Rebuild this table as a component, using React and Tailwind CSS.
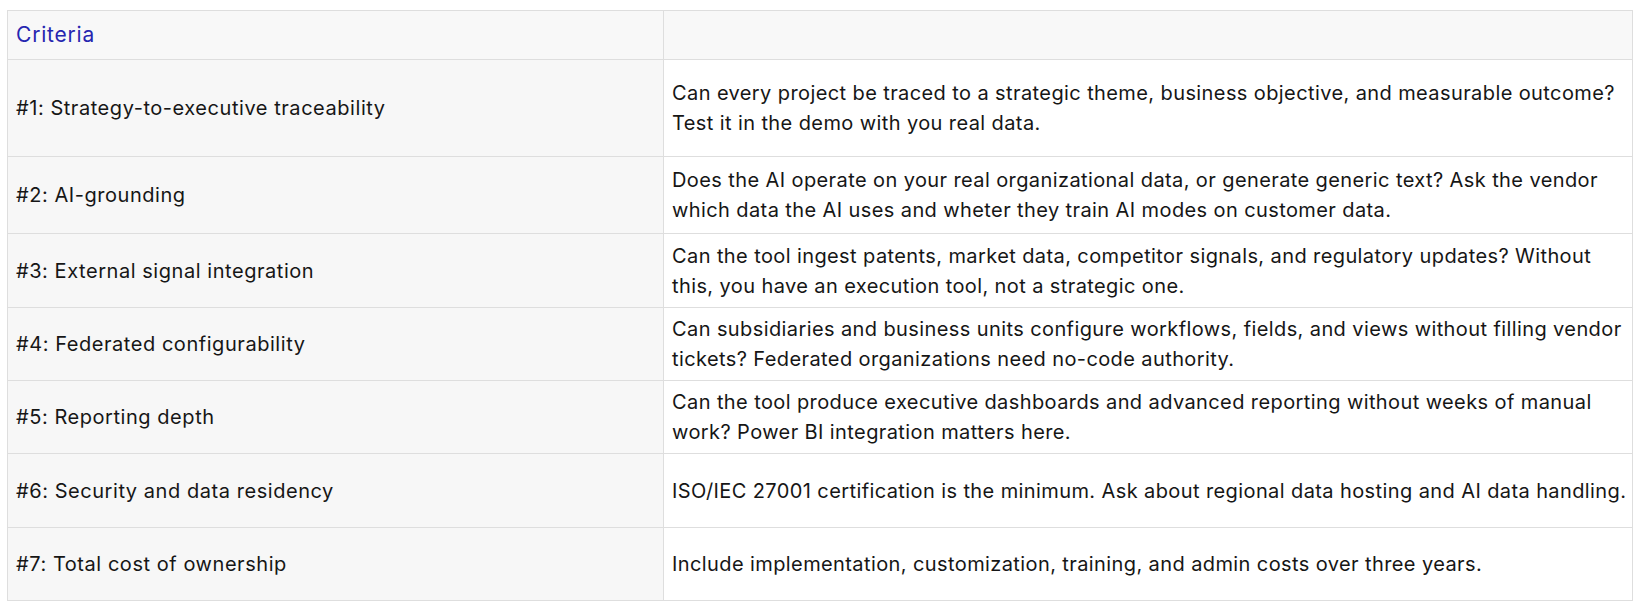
import React from "react";

const rows = [
  ["#1: Strategy-to-executive traceability", "Can every project be traced to a strategic theme, business objective, and measurable outcome? Test it in the demo with you real data.", "h-[97px]"],
  ["#2: AI-grounding", "Does the AI operate on your real organizational data, or generate generic text? Ask the vendor which data the AI uses and wheter they train AI modes on customer data.", "h-[77px]"],
  ["#3: External signal integration", "Can the tool ingest patents, market data, competitor signals, and regulatory updates? Without this, you have an execution tool, not a strategic one.", "h-[74px]"],
  ["#4: Federated configurability", "Can subsidiaries and business units configure workflows, fields, and views without filling vendor tickets? Federated organizations need no-code authority.", "h-[73px]"],
  ["#5: Reporting depth", "Can the tool produce executive dashboards and advanced reporting without weeks of manual work? Power BI integration matters here.", "h-[73px]"],
  ["#6: Security and data residency", "ISO/IEC 27001 certification is the minimum. Ask about regional data hosting and AI data handling.", "h-[74px]"],
  ["#7: Total cost of ownership", "Include implementation, customization, training, and admin costs over three years.", "h-[73px]"],
];

export default function App() {
  return (
    <div className="w-[1646px] h-[612px] bg-white pl-[7px] pt-[10px] font-['Inter',sans-serif] text-[#161616]">
      <table className="border-collapse table-fixed w-[1625px]">
        <colgroup>
          <col className="w-[656px]" />
          <col className="w-[969px]" />
        </colgroup>
        <tbody>
          <tr className="h-[49px] bg-[#f8f8f8]">
            <td className="border border-[#dedede] px-[8px] text-[21px] tracking-[0.8px] text-[#2626b0] align-middle">Criteria</td>
            <td className="border border-[#dedede] px-[8px]"></td>
          </tr>
          {rows.map(([a, b, h]) => (
            <tr key={a} className={h}>
              <td className="border border-[#dedede] bg-[#f7f7f7] px-[8px] text-[20px] tracking-[0.55px] align-middle">{a}</td>
              <td className="border border-[#dedede] bg-white pl-[8px] pr-0 text-[20px] tracking-[0.4px] leading-[30px] align-middle">{b}</td>
            </tr>
          ))}
        </tbody>
      </table>
    </div>
  );
}
